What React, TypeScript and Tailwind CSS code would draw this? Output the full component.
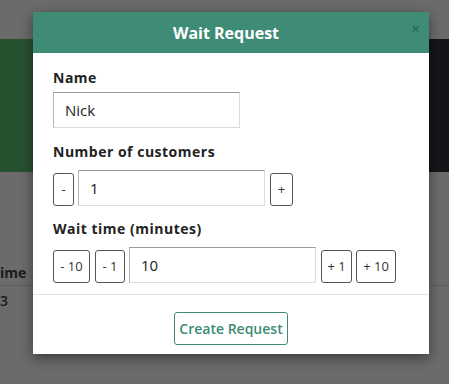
import React from 'react';

const font = { fontFamily: '"Open Sans", "DejaVu Sans", sans-serif' };

const StepButton: React.FC<{ label: string; w: string }> = ({ label, w }) => (
  <button
    className={`${w} h-[33px] shrink-0 rounded-[3px] border border-[#555] bg-white text-[13px] font-medium text-[#333] leading-none`}
  >
    {label}
  </button>
);

const Field: React.FC<{ value: string; className?: string }> = ({ value, className = '' }) => (
  <input
    readOnly
    value={value}
    className={`h-[36px] w-[187px] shrink-0 border border-[#dcdcdc] border-t-[#9a9a9a] border-l-[#b5b5b5] bg-white px-[11px] text-[15px] font-medium text-[#222] outline-none ${className}`}
  />
);

export default function App() {
  return (
    <div className="relative h-[384px] w-[449px] overflow-hidden bg-[#6b6b6b]" style={font}>
      {/* page behind the modal */}
      <div className="flex flex-col">
        <div className="h-[39px]" />
        <div className="flex h-[133px]">
          <div className="w-[429px] bg-[#27522f]" />
          <div className="flex-1 bg-[#131519]" />
        </div>
        <div className="mt-[88px] flex h-[26px] items-center border-b border-[#5c5c5c] text-[14px] font-bold text-[#1b1b1b]">
          <span>ime</span>
        </div>
        <div className="pt-[4px] text-[14px] font-semibold text-[#1b1b1b]">3</div>
      </div>

      {/* modal */}
      <div className="absolute left-[33px] top-[12px] flex h-[342px] w-[396px] flex-col bg-white shadow-[0_4px_12px_rgba(0,0,0,0.45)]">
        <div className="relative flex h-[41px] shrink-0 items-center justify-center bg-[#3e8c76] pr-[10px] text-[16px] font-bold text-white">
          Wait Request
          <span className="absolute right-[9px] top-[5px] text-[15px] font-bold text-[#2d6b58]">×</span>
        </div>

        <div className="flex flex-col px-[20px] pt-[15px] pb-[11px] text-[#222]">
          <label className="text-[14px] font-bold leading-[20px] tracking-[0.5px]">Name</label>
          <Field value="Nick" className="mt-[4px]" />

          <label className="mt-[14px] text-[14px] font-bold leading-[20px] tracking-[0.5px]">Number of customers</label>
          <div className="mt-[8px] flex items-end">
            <StepButton label="-" w="w-[21px]" />
            <Field value="1" className="ml-[4px] w-[186px]" />
            <StepButton label="+" w="ml-[5px] w-[23px]" />
          </div>

          <label className="mt-[13px] text-[14px] font-bold leading-[20px] tracking-[0.5px]">Wait time (minutes)</label>
          <div className="mt-[8px] flex items-end">
            <StepButton label="- 10" w="w-[37px]" />
            <StepButton label="- 1" w="ml-[5px] w-[30px]" />
            <Field value="10" className="ml-[4px] h-[35px] w-[186px]" />
            <StepButton label="+ 1" w="ml-[5px] w-[31px]" />
            <StepButton label="+ 10" w="ml-[4px] w-[40px]" />
          </div>
        </div>

        <div className="flex flex-1 justify-center border-t border-[#e2e2e2] pt-[17px]">
          <button className="h-[33px] w-[114px] rounded-[3px] border border-[#3e8c76] bg-white text-[14px] font-semibold text-[#3e8c76]">
            Create Request
          </button>
        </div>
      </div>
    </div>
  );
}
